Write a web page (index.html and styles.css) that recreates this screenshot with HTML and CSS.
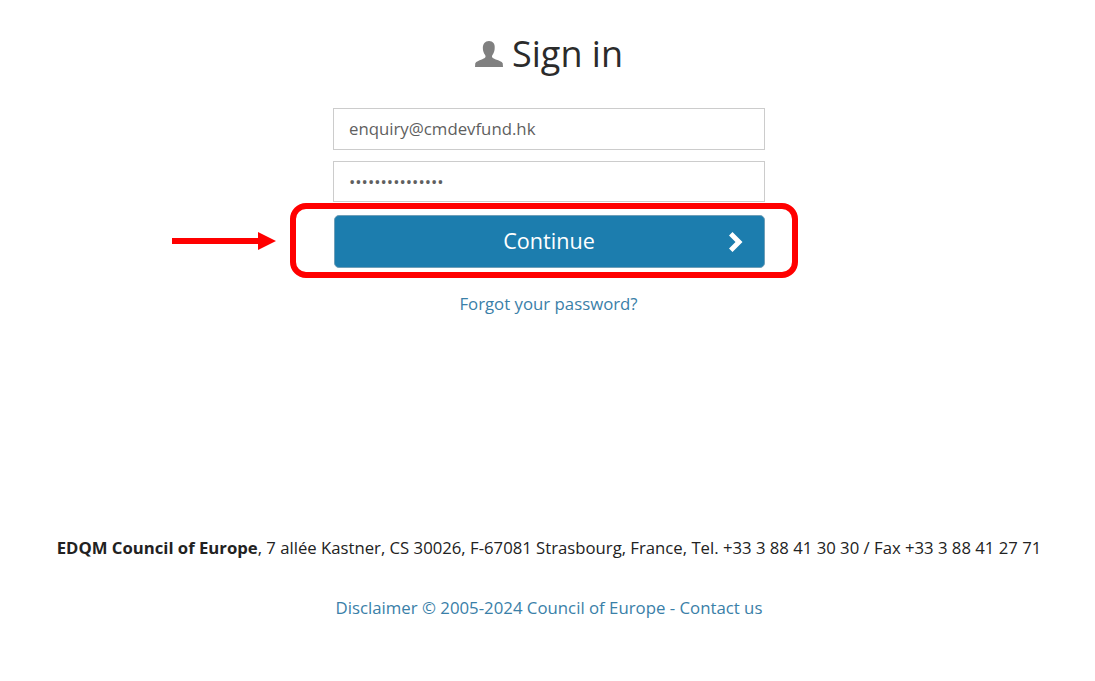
FILE: index.html
```html
<!DOCTYPE html>
<html lang="en">
<head>
<meta charset="utf-8">
<title>Sign in</title>
<link rel="stylesheet" href="styles.css">
</head>
<body>
<main class="page">
  <h1 class="title">
    <svg class="user-icon" viewBox="0 0 30 28" aria-hidden="true"><path d="M15 0c-4.300 0-6.600 3.100-6.600 7.600 0 3 .9 5.500 2.400 7.400.7.900.7 2.300-.2 3.100-.7.600-1.700 1-3.400 1.700C4 21.100 1.300 22 .3 23.800L0 28h30l-.3-4.200c-1-1.800-3.700-2.700-7.400-4-1.700-.7-2.700-1.100-3.400-1.700-.9-.8-.9-2.200-.2-3.100 1.500-1.900 2.400-4.400 2.400-7.400C21.600 3.100 19.300 0 15 0z"/></svg>
    <span>Sign in</span>
  </h1>
  <form class="form">
    <div class="field">enquiry@cmdevfund.hk</div>
    <div class="field field-password">•••••••••••••••</div>
    <button class="continue" type="button">
      <span>Continue</span>
      <svg class="chevron" viewBox="0 0 16 20" aria-hidden="true"><path d="M0 3.500 3.500 0 13.500 10 3.500 20 0 16.500 6.500 10z" /></svg>
    </button>
  </form>
  <a class="forgot" href="#">Forgot your password?</a>
  <footer class="footer">
    <p class="address"><strong>EDQM Council of Europe</strong>, 7 allée Kastner, CS 30026, F-67081 Strasbourg, France, Tel. +33 3 88 41 30 30 / Fax +33 3 88 41 27 71</p>
    <p class="legal"><a href="#">Disclaimer</a> © 2005-2024 Council of Europe - <a href="#">Contact us</a></p>
  </footer>
  <div class="highlight"></div>
  <svg class="arrow" viewBox="0 0 104 18" aria-hidden="true"><path d="M0 6h86V0l18 9-18 9v-6H0z"/></svg>
</main>
</body>
</html>
```
FILE: styles.css
```css
* { box-sizing: border-box; }
html, body { margin: 0; height: 100%; background: #fff; }
body { font-family: "Open Sans", sans-serif; color: #333; overflow: hidden; }
.page {
  position: relative;
  width: 1095px;
  height: 681px;
  display: flex;
  flex-direction: column;
  align-items: center;
}
.title {
  margin: 28px 0 0 3px;
  height: 52px;
  display: flex;
  align-items: center;
  gap: 9px;
  font-size: 36px;
  font-weight: 400;
  line-height: 52px;
  color: #2b2b2b;
}
.user-icon { width: 28px; height: 28px; fill: #808080; }
.form {
  width: 432px;
  margin: 28px 0 0 3px;
  display: flex;
  flex-direction: column;
}
.field {
  height: 42px;
  border: 1px solid #ccc;
  padding: 0 15px;
  font-size: 16.8px;
  line-height: 40px;
  color: #5f5f5f;
  background: #fff;
}
.field-password { height: 41px; margin-top: 11px; }
.continue {
  position: relative;
  height: 53px;
  margin: 13px 0 0 1px;
  width: 431px;
  border: 1px solid #6f9fb8;
  border-radius: 5px;
  background: #1c7dae;
  color: #fff;
  font: 400 21.6px "Open Sans", sans-serif;
  padding: 0 1px 2px 0;
}
.chevron {
  position: absolute;
  right: 19px;
  top: 16px;
  width: 16px;
  height: 20px;
  fill: #fff;
}
.forgot {
  margin: 25px 0 0 2px;
  font-size: 16.8px;
  line-height: 22px;
  color: #3a80a8;
  text-decoration: none;
}
.footer { margin: 222px 0 0 3px; text-align: center; font-size: 16.72px; line-height: 22px; }
.address { margin: 0; color: #222; }
.legal { margin: 38px 0 0; color: #3a80a8; font-size: 16.8px; }
.legal a { color: #3a80a8; text-decoration: none; }
.highlight {
  position: absolute;
  left: 290px;
  top: 203px;
  width: 508px;
  height: 75px;
  border: 6px solid #f00;
  border-radius: 16px;
}
.arrow { position: absolute; left: 172px; top: 232px; width: 104px; height: 18px; fill: #f00; }
```
